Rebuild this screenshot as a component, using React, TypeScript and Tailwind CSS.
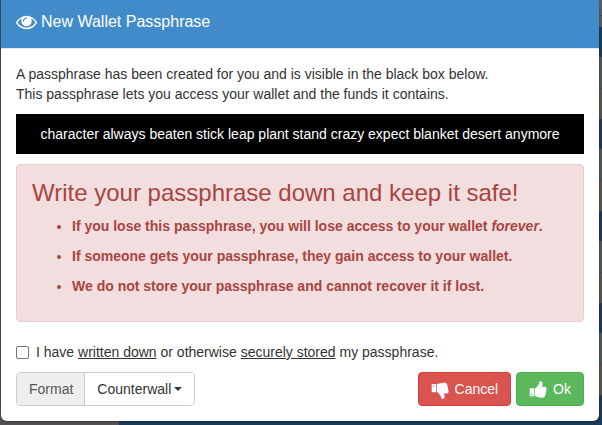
import React from "react";

const THUMB =
  "M320 1344q0-26-19-45t-45-19q-27 0-45.5 19t-18.5 45q0 27 18.5 45.5t45.5 18.5q26 0 45-18.5t19-45.5zm160-512v640q0 26-19 45t-45 19h-288q-26 0-45-19t-19-45v-640q0-26 19-45t45-19h288q26 0 45 19t19 45zm1184 0q0 86-55 149 15 44 15 76 3 76-43 137 17 56 0 117-15 57-54 94 9 112-49 181-64 76-197 78h-129q-66 0-144-15.5t-121.5-29-120.5-39.5q-123-43-158-44-26-1-45-19.5t-19-44.5v-641q0-25 18-43.5t43-20.5q24-2 76-59t101-121q68-87 101-120 18-18 31-48t17.5-48.5 13.5-60.5q7-39 12.5-61t19.5-52 34-50q19-19 45-19 46 0 82.5 10.5t60 26 40 40.5 24 45 12 50 5 45 .5 39q0 38-9.5 76t-19 60-27.5 56q-3 6-10 18t-11 22-8 24h277q78 0 135 57t57 135z";

function EyeIcon() {
  return (
    <svg viewBox="0 64 1792 1792" className="h-[21px] w-[21px] fill-current" aria-hidden="true">
      <path d="M1664 960q-152-236-381-353 61 104 61 225 0 185-131.5 316.5t-316.5 131.5-316.5-131.5-131.5-316.5q0-121 61-225-229 117-381 353 133 205 333.5 326.5t434.5 121.5 434.5-121.5 333.5-326.5zm-720-384q0-20-14-34t-34-14q-125 0-214.5 89.5t-89.5 214.5q0 20 14 34t34 14 34-14 14-34q0-86 61-147t147-61q20 0 34-14t14-34zm848 384q0 34-20 69-140 230-376.5 368.5t-499.5 138.5-499.5-139-376.5-368q-20-35-20-69t20-69q140-229 376.5-368t499.5-139 499.5 139 376.5 368q20 35 20 69z" />
    </svg>
  );
}

function ThumbIcon({ down = false }: { down?: boolean }) {
  return (
    <svg viewBox="0 0 1792 1792" className="h-[19px] w-[19px] fill-current" aria-hidden="true">
      <path d={THUMB} transform={down ? "matrix(1 0 0 -1 0 1920)" : undefined} />
    </svg>
  );
}

/* The page behind the dialog, dimmed by the modal backdrop. */
function Backdrop() {
  return (
    <div className="absolute inset-0 flex flex-col overflow-hidden" aria-hidden="true">
      <div className="flex grow">
        <div className="flex w-[119px] flex-col bg-[#4a4a4a]">
          <div className="h-[410px]" />
          <div className="grow bg-[#565352]" />
        </div>
        <div className="flex grow flex-col">
          <div className="h-[15px] shrink-0 bg-[#5d5d5d]" />
          <div className="h-3 shrink-0 border-t border-[#484848] bg-[#5a5754]" />
          {[0, 1, 2, 3, 4].map((n) => (
            <div key={n} className="shrink-0">
              <div className="h-[30px] bg-[#1a3a57]" />
              <div className="h-[31px] bg-[#4c5557]" />
              <div className="h-[31px] border-t border-[#4b4b4b] bg-[#55524f]" />
            </div>
          ))}
        </div>
      </div>
    </div>
  );
}

const WARNINGS: React.ReactNode[] = [
  <>
    If you lose this passphrase, you will lose access to your wallet <em>forever</em>.
  </>,
  "If someone gets your passphrase, they gain access to your wallet.",
  "We do not store your passphrase and cannot recover it if lost.",
];

const BUTTON = "flex h-[34px] items-center gap-[5px] rounded border px-3 text-white";

export default function App() {
  return (
    <div className="relative min-h-screen overflow-hidden font-['Liberation_Sans',Arial,sans-serif] text-sm leading-5 text-[#333333]">
      <Backdrop />
      <div
        role="dialog"
        aria-labelledby="title"
        className="relative mr-[3px] mb-1 ml-px overflow-hidden rounded-b-md bg-white shadow-[0_1px_2px_rgba(0,0,0,0.3)]"
      >
        <header className="flex h-[49px] items-center gap-1 border-b border-[#e5e5e5] bg-[#428bca] px-[15px] pb-1 text-white">
          <EyeIcon />
          <h1 id="title" className="text-base">
            New Wallet Passphrase
          </h1>
        </header>

        <main className="p-[15px]">
          <p>
            A passphrase has been created for you and is visible in the black box below.
            <br />
            This passphrase lets you access your wallet and the funds it contains.
          </p>

          <div className="my-2.5 bg-black p-2.5 text-center text-white">
            character always beaten stick leap plant stand crazy expect blanket desert anymore
          </div>

          <section className="mb-5 rounded border border-[#ebccd1] bg-[#f2dede] p-[15px] text-[#a94442]">
            <h2 className="mb-2.5 text-2xl leading-[26px]">Write your passphrase down and keep it safe!</h2>
            <ul className="list-disc pl-10 font-bold">
              {WARNINGS.map((text, i) => (
                <li key={i} className="mb-2.5">
                  {text}
                </li>
              ))}
            </ul>
          </section>

          <label className="mb-2.5 flex items-center gap-[7px]">
            <input
              type="checkbox"
              className="h-[13px] w-[13px] appearance-none rounded-[2px] border border-[#767676] bg-white checked:bg-[#428bca]"
            />
            <span>
              I have <u>written down</u> or otherwise <u>securely stored</u> my passphrase.
            </span>
          </label>

          <div className="flex items-center justify-between">
            <div className="flex h-[34px] rounded border border-[#cccccc]">
              <label
                htmlFor="format"
                className="flex items-center rounded-l-[3px] border-r border-[#cccccc] bg-[#eeeeee] pr-[11px] pl-3 text-[#555555]"
              >
                Format
              </label>
              <div className="relative flex">
                <select
                  id="format"
                  className="w-[109px] appearance-none rounded-r-[3px] bg-white pr-5 pl-3 text-[#333333]"
                >
                  <option>Counterwall</option>
                </select>
                <span className="pointer-events-none absolute top-3.5 right-3 h-0 w-0 border-x-4 border-t-4 border-x-transparent border-t-[#333333]" />
              </div>
            </div>

            <div className="flex gap-[5px]">
              <button type="button" className={`${BUTTON} border-[#d43f3a] bg-[#d9534f]`}>
                <ThumbIcon down />
                Cancel
              </button>
              <button type="button" className={`${BUTTON} border-[#4cae4c] bg-[#5cb85c]`}>
                <ThumbIcon />
                Ok
              </button>
            </div>
          </div>
        </main>
      </div>
    </div>
  );
}
